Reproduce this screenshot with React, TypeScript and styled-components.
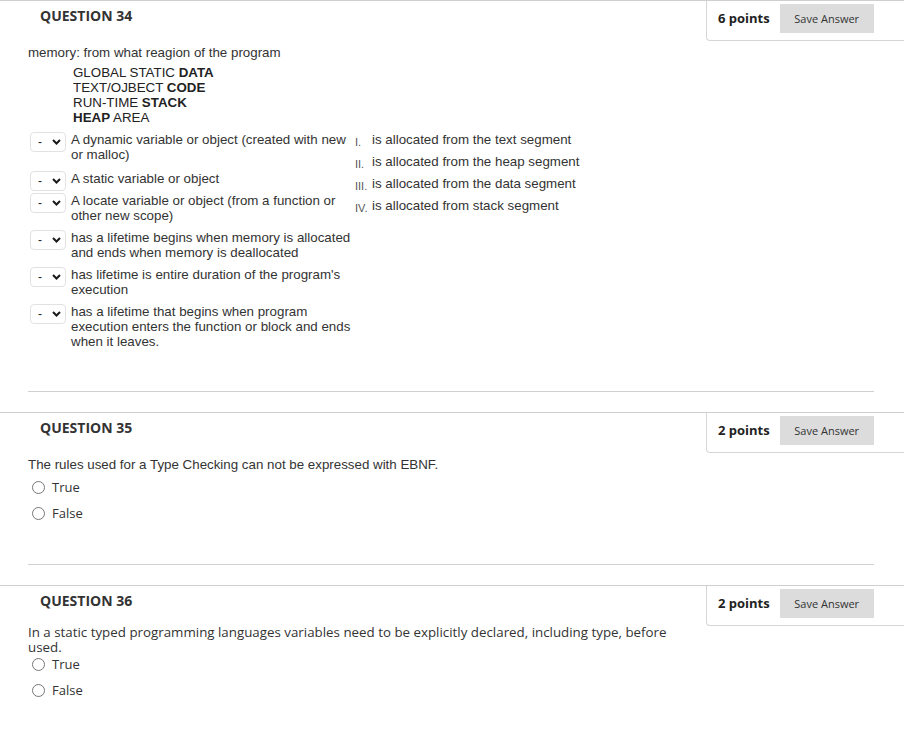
import React from "react";
import styled, { createGlobalStyle } from "styled-components";

const Global = createGlobalStyle`
  html, body { margin: 0; padding: 0; background: #fff; }
  body { font-family: "Liberation Sans", Arial, sans-serif; color: #333; }
`;

const Page = styled.div`
  width: 904px;
  display: flex;
  flex-direction: column;
`;

const Section = styled.section`
  border-top: 1px solid #cfcfcf;
  display: flex;
  flex-direction: column;
`;

const Header = styled.div`
  display: flex;
  justify-content: space-between;
  align-items: flex-start;
  height: 40px;
`;

const Title = styled.h3`
  margin: 0;
  padding: 6px 0 0 40px;
  font-family: "Open Sans", sans-serif;
  font-weight: 700;
  font-size: 14px;
  line-height: 18px;
  color: #333;
`;

const PointsBox = styled.div`
  width: 198px;
  height: 40px;
  box-sizing: border-box;
  border-left: 1px solid #d6d6d6;
  border-bottom: 1px solid #d6d6d6;
  border-bottom-left-radius: 4px;
  display: flex;
  align-items: flex-start;
  padding: 3px 0 0 11px;
  gap: 10px;
`;

const Points = styled.span`
  font-family: "Open Sans", sans-serif;
  font-weight: 700;
  font-size: 13px;
  line-height: 29px;
  color: #222;
`;

const SaveButton = styled.button`
  width: 94px;
  height: 29px;
  border: none;
  background: #dcdcdc;
  font-family: "Open Sans", sans-serif;
  font-size: 11px;
  color: #333;
  padding: 0;
  cursor: pointer;
`;

const Body = styled.div<{ $top: number; $bottom: number }>`
  margin-top: ${(p) => p.$top}px;
  padding: 0 0 ${(p) => p.$bottom}px 28px;
  display: flex;
  flex-direction: column;
`;

const Prompt = styled.div<{ $open?: boolean }>`
  font-family: ${(p) => (p.$open ? '"Open Sans", sans-serif' : '"Liberation Sans", Arial, sans-serif')};
  font-size: 13.33px;
  line-height: 15px;
  color: #333;
  max-width: 640px;
`;

const RegionList = styled.div`
  padding: 5px 0 0 45px;
  font-size: 13.33px;
  line-height: 15px;
  color: #222;
`;

const Matching = styled.div`
  display: flex;
  align-items: flex-start;
  margin-top: 7px;
`;

const LeftCol = styled.div`
  width: 325px;
  padding-left: 2px;
  display: flex;
  flex-direction: column;
  gap: 2px;
`;

const MatchRow = styled.div<{ $extra?: number }>`
  display: flex;
  align-items: flex-start;
  gap: 5px;
  margin-bottom: ${(p) => p.$extra || 0}px;
`;

const Select = styled.div`
  width: 36px;
  height: 20px;
  flex: none;
  box-sizing: border-box;
  border: 1px solid #e2e2e2;
  border-radius: 4px;
  display: flex;
  align-items: center;
  justify-content: space-between;
  padding: 0 4px 0 7px;
  font-size: 12px;
  color: #222;
`;

const RowText = styled.div`
  font-size: 13.33px;
  line-height: 15px;
  padding-bottom: 5px;
  color: #333;
`;

const RightCol = styled.div`
  display: flex;
  flex-direction: column;
`;

const AnswerRow = styled.div`
  display: flex;
  align-items: baseline;
  height: 22px;
  font-size: 13.33px;
  line-height: 15px;
`;

const Numeral = styled.span`
  width: 17px;
  flex: none;
  font-size: 11px;
  color: #555;
  position: relative;
  top: 2px;
`;

const Divider = styled.hr`
  border: none;
  border-top: 1px solid #d0d0d0;
  margin: 0 30px 20px 28px;
`;

const RadioGroup = styled.div<{ $top: number }>`
  display: flex;
  flex-direction: column;
  gap: 6px;
  margin-top: ${(p) => p.$top}px;
`;

const RadioRow = styled.label`
  display: flex;
  align-items: center;
  height: 20px;
  padding-left: 4px;
  gap: 7px;
  font-family: "Open Sans", sans-serif;
  font-size: 13px;
  color: #333;
`;

const RadioCircle = styled.span`
  width: 13px;
  height: 13px;
  box-sizing: border-box;
  border: 1px solid #767676;
  border-radius: 50%;
  background: #fff;
`;

const Chevron = () => (
  <svg width="9" height="6" viewBox="0 0 9 6">
    <path d="M1 1 L4.5 4.5 L8 1" fill="none" stroke="#1a1a1a" strokeWidth="2" />
  </svg>
);

const Head = ({ n, pts }: { n: number; pts: number }) => (
  <Header>
    <Title>QUESTION {n}</Title>
    <PointsBox>
      <Points>{pts} points</Points>
      <SaveButton>Save Answer</SaveButton>
    </PointsBox>
  </Header>
);

const leftItems = [
  "A dynamic variable or object (created with new or malloc)",
  "A static variable or object",
  "A locate variable or object (from a function or other new scope)",
  "has a lifetime begins when memory is allocated and ends when memory is deallocated",
  "has lifetime is entire duration of the program's execution",
  "has a lifetime that begins when program execution enters the function or block and ends when it leaves.",
];

const rightItems = [
  ["I.", "is allocated from the text segment"],
  ["II.", "is allocated from the heap segment"],
  ["III.", "is allocated from the data segment"],
  ["IV.", "is allocated from stack segment"],
];

const Radios = ({ top }: { top: number }) => (
  <RadioGroup $top={top}>
    <RadioRow>
      <RadioCircle />
      True
    </RadioRow>
    <RadioRow>
      <RadioCircle />
      False
    </RadioRow>
  </RadioGroup>
);

export default function App() {
  return (
    <>
      <Global />
      <Page>
        <Section>
          <Head n={34} pts={6} />
          <Body $top={4} $bottom={37}>
            <Prompt>memory: from what reagion of the program</Prompt>
            <RegionList>
              <div>GLOBAL STATIC <b>DATA</b></div>
              <div>TEXT/OJBECT <b>CODE</b></div>
              <div>RUN-TIME <b>STACK</b></div>
              <div><b>HEAP</b> AREA</div>
            </RegionList>
            <Matching>
              <LeftCol>
                {leftItems.map((t, i) => (
                  <MatchRow key={t} $extra={i === 0 ? 2 : 0}>
                    <Select>
                      <span>-</span>
                      <Chevron />
                    </Select>
                    <RowText>{t}</RowText>
                  </MatchRow>
                ))}
              </LeftCol>
              <RightCol>
                {rightItems.map(([n, t]) => (
                  <AnswerRow key={n}>
                    <Numeral>{n}</Numeral>
                    <span>{t}</span>
                  </AnswerRow>
                ))}
              </RightCol>
            </Matching>
          </Body>
          <Divider />
        </Section>
        <Section>
          <Head n={35} pts={2} />
          <Body $top={4} $bottom={41}>
            <Prompt>The rules used for a Type Checking can not be expressed with EBNF.</Prompt>
            <Radios top={5} />
          </Body>
          <Divider />
        </Section>
        <Section>
          <Head n={36} pts={2} />
          <Body $top={-1} $bottom={20}>
            <Prompt $open>
              In a static typed programming languages variables need to be explicitly declared, including type, before used.
            </Prompt>
            <Radios top={-1} />
          </Body>
        </Section>
      </Page>
    </>
  );
}
